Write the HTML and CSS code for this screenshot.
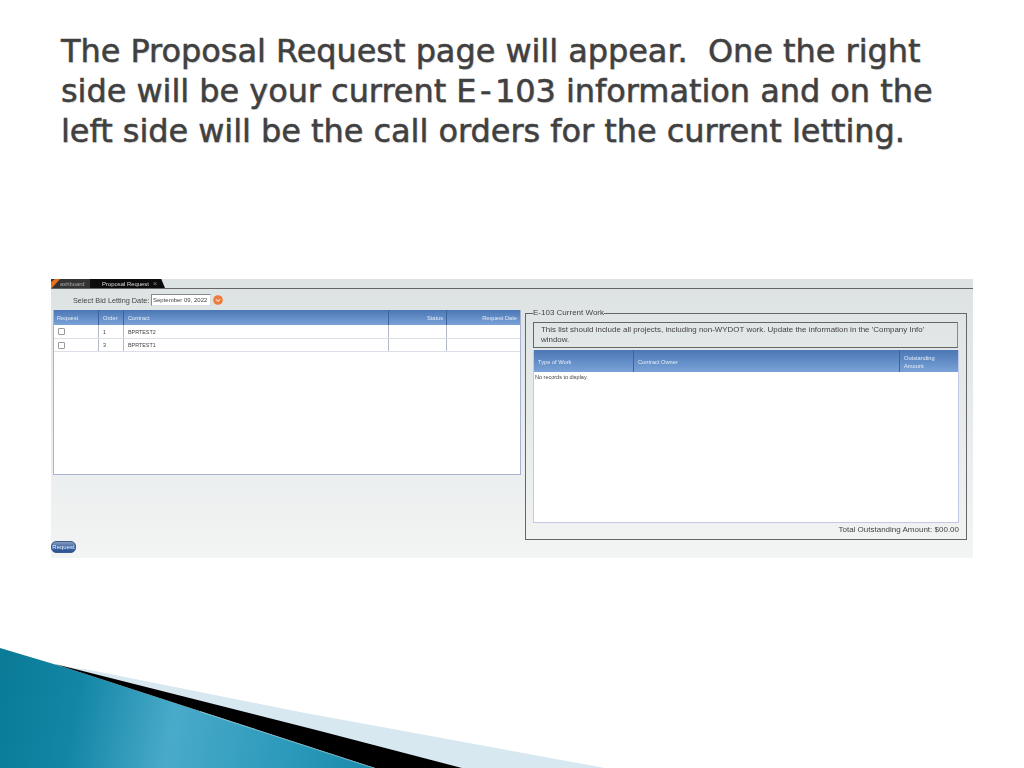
FILE: index.html
```html
<!DOCTYPE html>
<html lang="en">
<head>
<meta charset="utf-8">
<title>Proposal Request</title>
<link rel="stylesheet" href="styles.css">
</head>
<body>
<div class="slide">
  <h1 class="title">The Proposal Request page will appear.&nbsp; One the right<br>side will be your current E<span class="hy">-</span>103 information and on the<br>left side will be the call orders for the current letting.</h1>
  <div class="app">
    <div class="tabs">
      <div class="tab tab-dash"><svg class="tab-corner" width="9" height="10" viewBox="0 0 9 10"><path d="M0 10V3L4 0H9L0 10Z" fill="#e8701a"/></svg><span>ashboard</span></div>
      <div class="tab tab-active"><span>Proposal Request</span><span class="tab-x">×</span></div>
    </div>
    <div class="toolbar">
      <span class="date-label">Select Bid Letting Date:</span>
      <span class="date-input">September 09, 2022</span>
      <svg class="date-btn" width="10" height="10" viewBox="0 0 10 10"><circle cx="5" cy="5" r="4.8" fill="#ee7a3c"/><path d="M2.8 4.2L5 6.4L7.2 4.2" fill="none" stroke="#fbd9c4" stroke-width="1.2"/></svg>
    </div>
    <div class="content">
      <div class="left">
        <div class="grid grid-left">
          <div class="row head">
            <span class="c c-req">Request</span><span class="c c-ord">Order</span><span class="c c-con">Contract</span><span class="c c-sta">Status</span><span class="c c-dat">Request Date</span>
          </div>
          <div class="row body-row">
            <span class="c c-req"><span class="check"></span></span><span class="c c-ord">1</span><span class="c c-con">BPRTEST2</span><span class="c c-sta"></span><span class="c c-dat"></span>
          </div>
          <div class="row body-row">
            <span class="c c-req"><span class="check"></span></span><span class="c c-ord">3</span><span class="c c-con">BPRTEST1</span><span class="c c-sta"></span><span class="c c-dat"></span>
          </div>
        </div>
        <button class="request-btn" type="button">Request</button>
      </div>
      <fieldset class="work">
        <legend>E-103 Current Work</legend>
        <div class="notice">This list should include all projects, including non-WYDOT work. Update the information in the 'Company Info' window.</div>
        <div class="grid grid-right">
          <div class="row head head-right">
            <span class="c c-type">Type of Work</span><span class="c c-owner">Contract Owner</span><span class="c c-amt">Outstanding Amount</span>
          </div>
          <div class="empty">No records to display.</div>
        </div>
        <div class="total">Total Outstanding Amount: $00.00</div>
      </fieldset>
    </div>
  </div>
  <svg class="swoosh" width="1024" height="122" viewBox="0 646 1024 122" aria-hidden="true">
    <defs>
      <linearGradient id="teal" gradientUnits="userSpaceOnUse" x1="0" y1="700" x2="380" y2="768">
        <stop offset="0" stop-color="#0a7c98"/>
        <stop offset="0.2" stop-color="#1386a6"/>
        <stop offset="0.45" stop-color="#4aaac9"/>
        <stop offset="0.75" stop-color="#2c9abb"/>
        <stop offset="1" stop-color="#1a88a8"/>
      </linearGradient>
    </defs>
    <path d="M90 670L300 712L605 768H462L60 666Z" fill="#d8e8f1"/>
    <path d="M0 648L67 668L375 768H0Z" fill="url(#teal)"/>
    <path d="M55 664L320 731L462 768H375L67 668Z" fill="#000"/>
    <path d="M200 711.6L375 768.4" fill="none" stroke="#bfe3ee" stroke-width=".6" stroke-opacity=".8"/>
  </svg>
</div>
</body>
</html>
```
FILE: styles.css
```css
* { box-sizing: border-box; }
html, body { margin: 0; padding: 0; background: #fff; }
.slide { position: relative; width: 1024px; height: 768px; overflow: hidden; background: #fff; }
.title {
  margin: 0;
  height: 279px;
  padding: 31px 0 0 61px;
  font: 400 31.9px/40px "DejaVu Sans", sans-serif;
  color: #404040;
  white-space: nowrap;
  -webkit-text-stroke: .5px #404040;
  text-shadow: 1px 1px 1px rgba(0,0,0,.15);
}
.hy { padding: 0 3.5px; }
.app {
  width: 922px;
  height: 279px;
  margin-left: 51px;
  background: linear-gradient(#dde2e2, #e9eded 60%, #f3f4f4);
  font-family: "Liberation Sans", sans-serif;
  display: flex;
  flex-direction: column;
  filter: blur(.3px);
}
.tabs { display: flex; height: 10px; border-bottom: 1px solid #666; }
.tab { height: 9px; display: flex; align-items: center; font-size: 5.9px; color: #ddd; }
.tab-dash { position: relative; width: 39px; background: #333; padding-left: 9px; color: #aaa; }
.tab-corner { position: absolute; left: 0; top: 0; }
.tab-active {
  width: 75px;
  background: #0c0c0c;
  padding-left: 12px;
  gap: 4px;
  clip-path: polygon(0 0, 95% 0, 100% 100%, 0 100%);
}
.tab-x { color: #888; font-size: 8px; }
.toolbar { display: flex; align-items: center; height: 21px; padding: 1px 0 0 22px; }
.date-label { font-size: 7.3px; color: #444; width: 78px; white-space: nowrap; }
.date-input {
  width: 60px; height: 12px; margin-right: 2px; padding-left: 1px;
  font-size: 6px; line-height: 11px; color: #444; white-space: nowrap;
  background: #fff; border: 1px solid #888; border-right-color: #ddd; border-bottom-color: #ddd;
}
.content { display: flex; align-items: flex-start; gap: 4px; padding-left: 2px; }
.left { width: 468px; height: 243px; display: flex; flex-direction: column; }
.grid { background: #fff; display: flex; flex-direction: column; }
.grid-left { height: 165px; border: 1px solid #a9b2d0; border-top: 0; }
.row { display: flex; }
.c { display: flex; align-items: center; height: 100%; padding: 1px 4px 0; white-space: nowrap; border-right: 1px solid #b3b8c8; }
.c:last-child { border-right: 0; }
.head {
  height: 15px;
  background: linear-gradient(#4b77b5, #5f8ac4 45%, #7ba3d8);
  color: #e4ecf7;
  font-size: 5.7px;
}
.head .c { border-right-color: #3d639c; }
.body-row { height: 13.5px; font-size: 5.4px; color: #444; border-bottom: 1px solid #dcdfe8; }
.c-req { width: 45px; padding-left: 3px; }
.c-ord { width: 25px; }
.c-con { width: 265px; }
.c-sta { width: 58px; justify-content: flex-end; padding-right: 3px; }
.c-dat { flex: 1; justify-content: flex-end; padding-right: 3px; }
.check { width: 7px; height: 7px; margin-left: 1px; border: 1px solid #999; border-radius: 1px; background: #fff; }
.request-btn {
  margin: auto 0 0 -2px;
  width: 25px; height: 12px; padding: 0;
  font: 6px/10px "Liberation Sans", sans-serif;
  color: #e8eef8;
  border: 1px solid #3a5c94;
  border-radius: 5px;
  background: linear-gradient(#8c9bb5, #3f68a8 50%, #2f5390);
}
.work {
  width: 442px;
  height: 230px;
  margin: 0;
  padding: 6px 7px 0 7px;
  border: 1px solid #666;
  min-width: 0;
}
.work legend { padding: 0; margin-left: 0; font-size: 8px; line-height: 6px; height: 6px; color: #444; }
.notice {
  height: 26px;
  padding: 2px 7px;
  margin-right: 1px;
  font-size: 7.95px;
  line-height: 9.5px;
  color: #444;
  border: 1px solid #666;
  border-right-color: #888;
}
.grid-right { height: 173px; margin-top: 2px; border: 1px solid #c3c9e4; border-top: 0; }
.head-right { height: 22px; }
.c-type { width: 100px; }
.c-owner { width: 266px; }
.c-amt { flex: 1; white-space: normal; line-height: 8px; }
.empty { padding: 2px 1px; font-size: 5.5px; color: #444; }
.total { margin-top: 2px; text-align: right; font-size: 8px; line-height: 10px; color: #444; }
.swoosh { position: absolute; left: 0; bottom: 0; display: block; }
```
